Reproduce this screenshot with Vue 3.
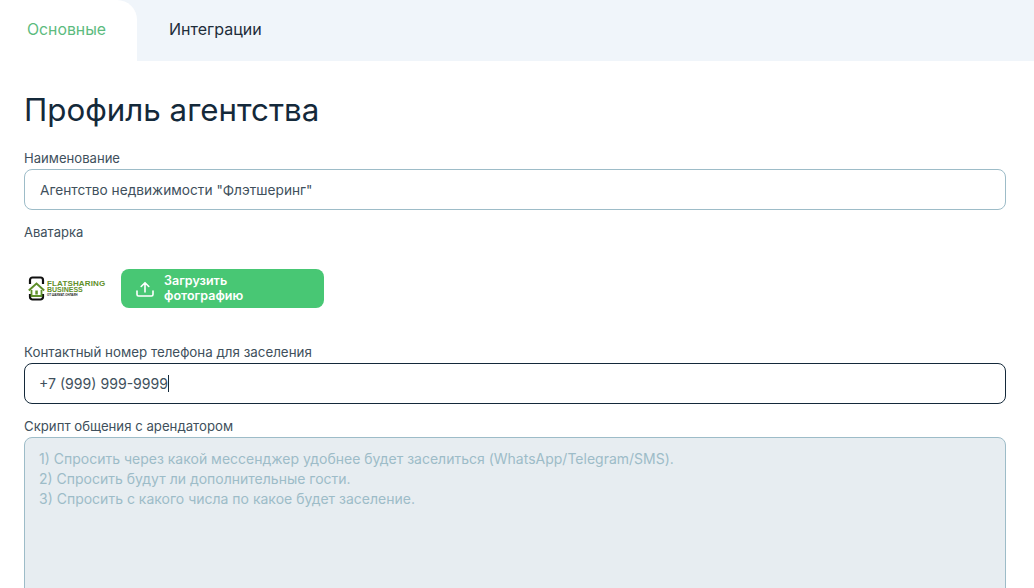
<template>
  <div class="page">
    <nav class="tabs">
      <div class="tab active">Основные</div>
      <div class="tab">Интеграции</div>
    </nav>
    <main class="content">
      <h1>Профиль агентства</h1>
      <label class="lbl">Наименование</label>
      <div class="field">Агентство недвижимости "Флэтшеринг"</div>
      <label class="lbl avatar-lbl">Аватарка</label>
      <div class="avatar-row">
        <div class="logo">
          <svg width="17" height="25" viewBox="0 0 17 25">
            <path d="M2 8V4a2.500 2.500 0 0 1 2.500-2.500h8A2.500 2.500 0 0 1 15 4v4M2 18v3a2.500 2.500 0 0 0 2.500 2.500h8A2.500 2.500 0 0 0 15 21v-3" fill="none" stroke="#111" stroke-width="2.200"/>
            <path d="M.8 14.500L8.500 7.500l7.700 7" fill="none" stroke="#5f8f2a" stroke-width="2"/>
            <path d="M3.500 14v6h10v-6" fill="none" stroke="#5f8f2a" stroke-width="1.800"/>
            <rect x="7.300" y="14.500" width="2.500" height="4" fill="#5f8f2a"/>
          </svg>
          <div class="logo-text">
            <span class="l1">FLATSHARING</span>
            <span class="l2">BUSINESS</span>
            <span class="l3">ОТ ШАХМАТ-ОНЛАЙН</span>
          </div>
        </div>
        <button class="upload">
          <svg width="20" height="20" viewBox="0 0 20 20" fill="none" stroke="#fff" stroke-width="1.600" stroke-linecap="round" stroke-linejoin="round">
            <path d="M2 12v3.500A1.500 1.500 0 0 0 3.500 17h13a1.500 1.500 0 0 0 1.500-1.500V12"/>
            <path d="M10 13V4M6.200 7.500L10 3.700l3.800 3.800"/>
          </svg>
          <span class="upload-text">Загрузить<br>фотографию</span>
        </button>
      </div>
      <label class="lbl phone-lbl">Контактный номер телефона для заселения</label>
      <div class="field focus"><span class="phone">+7 (999) 999-9999</span><i class="caret"></i></div>
      <label class="lbl script-lbl">Скрипт общения с арендатором</label>
      <div class="area">
        <div>1) Спросить через какой мессенджер удобнее будет заселиться (WhatsApp/Telegram/SMS).</div>
        <div>2) Спросить будут ли дополнительные гости.</div>
        <div>3) Спросить с какого числа по какое будет заселение.</div>
      </div>
    </main>
  </div>
</template>

<script setup>
</script>

<style>
html, body { margin: 0; background: #fff; overflow: hidden; }
</style>

<style scoped>
.page {
  width: 1034px;
  height: 588px;
  overflow: hidden;
  font-family: Inter, "Noto Sans", sans-serif;
  color: #1a2b3a;
  background: #fff;
}
.tabs {
  display: flex;
  height: 61px;
  background: #f0f5fa;
}
.tab {
  width: 137px;
  box-sizing: border-box;
  padding-left: 32px;
  line-height: 59px;
  font-size: 16px;
  color: #1f2d3a;
}
.tab.active {
  padding-left: 27px;
  background: #fff;
  border-radius: 0 20px 0 0;
  color: #5cbb7e;
  font-size: 15.800px;
}
.content {
  padding: 0 28px 0 24px;
}
h1 {
  margin: 29px 0 0;
  font-size: 31.300px;
  line-height: 40px;
  font-weight: 400;
  color: #14293a;
}
.lbl {
  display: block;
  font-size: 13.100px;
  line-height: 16px;
  color: #40505c;
}
h1 + .lbl { margin-top: 20px; }
.field {
  box-sizing: border-box;
  height: 41px;
  margin-top: 3px;
  padding-left: 15px;
  border: 1px solid #9dbcc8;
  border-radius: 8px;
  display: flex;
  align-items: center;
  font-size: 13.700px;
  color: #40505c;
}
.field.focus { border-color: #14293a; }
.phone { font-size: 14.100px; margin-left: -1px; }
.caret {
  width: 1px;
  height: 17px;
  background: #14293a;
}
.avatar-lbl { margin-top: 14px; font-size: 13px; }
.avatar-row {
  display: flex;
  align-items: center;
  gap: 15px;
  margin-top: 29px;
}
.logo {
  width: 82px;
  height: 39px;
  display: flex;
  align-items: center;
  gap: 2px;
  padding-left: 4px;
  box-sizing: border-box;
}
.logo-text {
  display: flex;
  flex-direction: column;
  font-family: "Liberation Sans", sans-serif;
  font-weight: 700;
  color: #5f8f2a;
}
.l1 { font-size: 8px; line-height: 7px; letter-spacing: 0.150px; }
.l2 { font-size: 7px; line-height: 6px; }
.l3 { font-size: 2.800px; line-height: 4px; color: #222; }
.upload {
  width: 203px;
  height: 39px;
  border: 0;
  border-radius: 8px;
  background: #48c774;
  color: #fff;
  font-family: inherit;
  font-size: 12.500px;
  font-weight: 600;
  line-height: 15px;
  display: flex;
  align-items: center;
  gap: 9px;
  padding: 0 0 0 14px;
  text-align: left;
}
.upload-text { margin-bottom: 2px; }
.phone-lbl { margin-top: 36px; font-size: 13.350px; }
.script-lbl { margin-top: 14px; font-size: 13.200px; }
.area {
  box-sizing: border-box;
  height: 170px;
  margin-top: 3px;
  padding: 11px 14px;
  border: 1px solid #9dbcc8;
  border-radius: 8px;
  background: #e7edf1;
  font-size: 14px;
  line-height: 20px;
  color: #9dbcc8;
}
</style>
